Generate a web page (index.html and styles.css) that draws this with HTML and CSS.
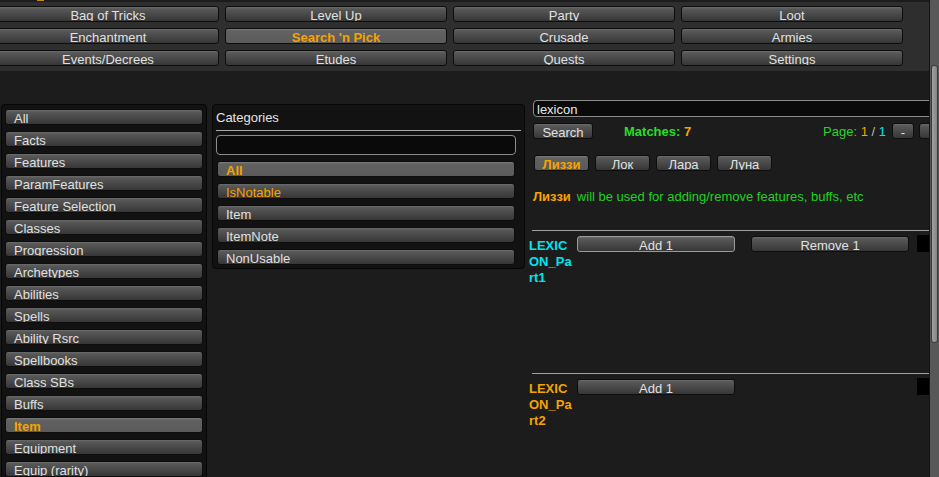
FILE: index.html
```html
<!DOCTYPE html>
<html>
<head>
  <meta charset="utf-8">
  <title>Search 'n Pick</title>
  <link rel="stylesheet" href="styles.css">
</head>
<body>
  <div class="screen">
    <div class="content">
      <div class="cap"><span></span></div>

      <!-- Top tabs -->
      <div class="tabs">
        <div class="btn">Bag of Tricks</div>
        <div class="btn">Level Up</div>
        <div class="btn">Party</div>
        <div class="btn">Loot</div>
        <div class="btn">Enchantment</div>
        <div class="btn sel">Search 'n Pick</div>
        <div class="btn">Crusade</div>
        <div class="btn">Armies</div>
        <div class="btn">Events/Decrees</div>
        <div class="btn">Etudes</div>
        <div class="btn">Quests</div>
        <div class="btn">Settings</div>
      </div>

      <div class="main">
        <!-- Blueprint types -->
        <div class="panel types">
          <div class="btn left">All</div>
          <div class="btn left">Facts</div>
          <div class="btn left">Features</div>
          <div class="btn left">ParamFeatures</div>
          <div class="btn left">Feature Selection</div>
          <div class="btn left">Classes</div>
          <div class="btn left">Progression</div>
          <div class="btn left">Archetypes</div>
          <div class="btn left">Abilities</div>
          <div class="btn left">Spells</div>
          <div class="btn left">Ability Rsrc</div>
          <div class="btn left">Spellbooks</div>
          <div class="btn left">Class SBs</div>
          <div class="btn left">Buffs</div>
          <div class="btn left sel">Item</div>
          <div class="btn left">Equipment</div>
          <div class="btn left">Equip (rarity)</div>
        </div>

        <!-- Categories -->
        <div class="panel cats">
          <div class="cats-title">Categories</div>
          <div class="field cats-field"></div>
          <div class="cats-list">
            <div class="btn left sel">All</div>
            <div class="btn left orange">IsNotable</div>
            <div class="btn left">Item</div>
            <div class="btn left">ItemNote</div>
            <div class="btn left">NonUsable</div>
          </div>
        </div>

        <!-- Search results -->
        <div class="results">
          <div class="field query">lexicon</div>
          <div class="search-row">
            <div class="btn search-btn">Search</div>
            <div class="matches">Matches: <span class="orange">7</span></div>
            <div class="page">Page: <span class="orange">1</span> <span class="grey">/</span> <span class="cyan">1</span></div>
            <div class="btn page-btn">-</div>
            <div class="btn page-btn"></div>
          </div>
          <div class="chars">
            <div class="btn char sel">Лиззи</div>
            <div class="btn char">Лок</div>
            <div class="btn char">Лара</div>
            <div class="btn char">Луна</div>
          </div>
          <div class="note"><b class="orange">Лиззи</b>will be used for adding/remove features, buffs, etc</div>

          <div class="item first">
            <div class="item-name cyan">LEXICON_Part1</div>
            <div class="btn act hover">Add 1</div>
            <div class="btn act">Remove 1</div>
            <div class="blk"></div>
          </div>
          <div class="item">
            <div class="item-name orange">LEXICON_Part2</div>
            <div class="btn act">Add 1</div>
            <div></div>
            <div class="blk"></div>
          </div>
        </div>
      </div>
    </div>

    <div class="scrollbar"><div class="thumb"></div></div>
  </div>
</body>
</html>
```

FILE: styles.css
```css
body {
  margin: 0;
  background-color: #1c1c1c;
  font-family: "Liberation Sans", Arial, sans-serif;
  font-size: 13px;
  color: #dedede;
  overflow: hidden;
}
.screen {
  display: flex;
  height: 477px;
  overflow: hidden;
}
.content {
  width: 929px;
  flex: none;
  overflow: hidden;
  background-color: #1c1c1c;
}
.cap {
  height: 2px;
  padding-left: 37px;
  background-color: #1c1c1c;
}
.cap span {
  display: block;
  width: 7px;
  height: 1px;
  background-color: #c88a10;
}

/* unity style buttons - descenders get clipped like in game */
.btn {
  box-sizing: border-box;
  height: 16px;
  padding-top: 1px;
  line-height: 15px;
  border: 1px solid #0d0d0d;
  border-radius: 3px;
  background: linear-gradient(#6c6c6c 0, #575757 2px, #4a4a4a 50%, #363636 100%);
  color: #e0e0e0;
  text-align: center;
  white-space: nowrap;
  overflow: hidden;
}
.btn.sel {
  background: linear-gradient(#7c7c7c 0, #616161 2px, #5b5b5b 100%);
  color: #f5a300;
  font-weight: bold;
}
.btn.left {
  text-align: left;
  padding-left: 8px;
}
.btn.hover {
  border-color: #9a9a9a;
}

.tabs {
  display: grid;
  grid-template-columns: repeat(4, 222px);
  gap: 6px;
  padding: 4px 0 5px;
  margin-left: -3px;
  background-color: #2e2e2e;
}

.main {
  display: flex;
  align-items: flex-start;
  padding-top: 29px;
}
.panel {
  box-sizing: border-box;
  flex: none;
  margin-top: 4px;
  border: 1px solid #060606;
  border-radius: 4px;
  background-color: #121212;
}
.types {
  width: 206px;
  margin-left: 1px;
  padding: 4px 3px;
  display: flex;
  flex-direction: column;
  gap: 6px;
}
.cats {
  width: 313px;
  height: 165px;
  margin-left: 5px;
  padding: 0 3px;
}
.cats-title {
  padding: 3px 0 2px;
  line-height: 20px;
  border-bottom: 1px solid #a8a8a8;
  color: #e4e4e4;
}
.field {
  box-sizing: border-box;
  border: 1px solid #8c8c8c;
  border-radius: 4px;
  background-color: #0a0a0a;
}
.cats-field {
  height: 20px;
  margin: 4px 5px 0 0;
}
.cats-list {
  display: flex;
  flex-direction: column;
  gap: 6px;
  margin: 6px 6px 0 1px;
}
.orange { color: #f5a300; }
.btn.orange { color: #f5a300; }
.cyan { color: #00e4ee; }
.grey { color: #bbbbbb; }

.results {
  width: 420px;
  flex: none;
  margin-left: 4px;
}
.query {
  height: 17px;
  width: 420px;
  margin-left: 4px;
  padding: 1px 0 0 3px;
  line-height: 16px;
  overflow: hidden;
  color: #e8e8e8;
}
.search-row {
  display: flex;
  align-items: center;
  width: 408px;
  margin: 6px 0 0 4px;
  height: 16px;
}
.search-btn {
  width: 60px;
}
.matches {
  margin-left: 31px;
  font-weight: bold;
  color: #2bdc2b;
}
.page {
  margin-left: auto;
  margin-right: 6px;
  color: #2bd42b;
}
.page-btn {
  width: 22px;
  margin-left: 5px;
}
.page + .page-btn {
  margin-left: 0;
}
.chars {
  display: flex;
  gap: 6px;
  margin: 16px 0 0 5px;
}
.char {
  width: 55px;
}
.note {
  margin: 18px 0 0 4px;
  line-height: 16px;
  color: #22d022;
}
.note b {
  margin-right: 6px;
}
.item {
  display: grid;
  grid-template-columns: 45px 174px 166px 20px;
  align-items: start;
  min-height: 143px;
  box-sizing: border-box;
  margin-left: 3px;
  padding-top: 5px;
  border-top: 1px solid #a0a0a0;
}
.item.first {
  margin-top: 25px;
}
.item-name {
  width: 46px;
  margin: 2px 0 0 -3px;
  font-weight: bold;
  line-height: 16px;
  word-break: break-all;
}
.act {
  width: 158px;
}
.blk {
  height: 17px;
  margin-top: -1px;
  background-color: #000;
}

.scrollbar {
  box-sizing: border-box;
  width: 10px;
  flex: none;
  padding-top: 65px;
  border-left: 1px solid #141414;
  background-color: #585858;
}
.thumb {
  height: 278px;
  margin: 0 1px 0 1px;
  box-sizing: border-box;
  border: 1px solid #3a3a3a;
  border-radius: 3px;
  background: linear-gradient(90deg, #a0a0a0, #868686);
}
```
